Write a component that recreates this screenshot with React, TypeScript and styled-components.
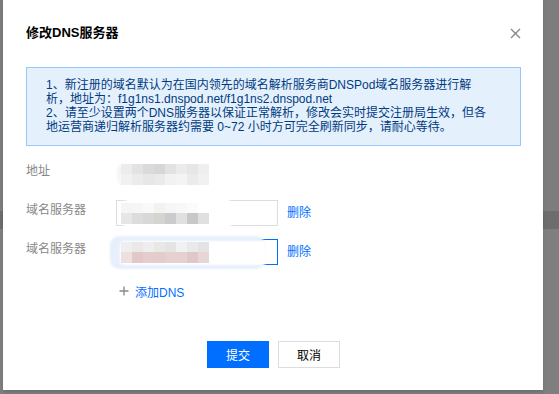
import React from "react";
import styled, { createGlobalStyle } from "styled-components";

const GlobalStyle = createGlobalStyle`
    html, body {
        margin: 0;
        padding: 0;
    }
    body {
        font-family: "Liberation Sans", "Noto Sans CJK SC", sans-serif;
        font-size: 12px;
        background: linear-gradient(to bottom, #7d7d7d 0 211px, #6d6d6d 211px 229px, #7f7f7f 229px);
    }
`;

const Page = styled.div`
    width: 559px;
    height: 394px;
    overflow: hidden;
    display: flex;
    align-items: flex-start;
    padding-left: 3px;
    box-sizing: border-box;
`;

const Dialog = styled.div`
    width: 540px;
    height: 390px;
    background: #fff;
    box-sizing: border-box;
    padding: 0 22px 0 23px;
    box-shadow: 0 2px 3px rgba(0, 0, 0, 0.15);
    display: flex;
    flex-direction: column;
`;

const Header = styled.div`
    display: flex;
    align-items: center;
    justify-content: space-between;
    padding-top: 24px;
    height: 18px;
    margin-bottom: 25px;
`;

const Title = styled.h3`
    margin: 0;
    font-size: 13px;
    font-weight: bold;
    color: #000;
    line-height: 18px;
`;

const CloseButton = styled.button`
    border: 0;
    background: none;
    padding: 0;
    width: 12px;
    height: 12px;
    display: flex;
    align-items: center;
    justify-content: center;
    cursor: pointer;
`;

const Notice = styled.div`
    border: 1px solid #97c7ff;
    background: #e5f0fd;
    color: #003b80;
    padding: 10px 18px 11px 19px;
    line-height: 14px;
    font-size: 12px;
`;

const NoticeLine = styled.div`
    white-space: nowrap;
`;

const Form = styled.div`
    margin-top: 15px;
    display: flex;
    flex-direction: column;
    gap: 13px;
`;

const Row = styled.div`
    display: flex;
    align-items: flex-start;
    min-height: 26px;
`;

const Label = styled.div`
    width: 90px;
    flex-shrink: 0;
    color: #888;
    line-height: 20px;
`;

const Value = styled.div`
    height: 26px;
    display: flex;
    align-items: center;
    padding-left: 5px;
    position: relative;
`;

const InputBox = styled.div<{ $focused?: boolean }>`
    position: relative;
    width: 162px;
    height: 26px;
    box-sizing: border-box;
    border: 1px solid ${(p) => (p.$focused ? "#006eff" : "#dddddd")};
    background: #fff;
    display: flex;
    align-items: center;
    padding-left: 4px;
`;

const Smudge = styled.div<{ $tone: string; $radius: number }>`
    position: absolute;
    border-radius: ${(p) => p.$radius}px;
    background: ${(p) => p.$tone};
    filter: blur(1px);
    z-index: 1;
`;

const MosaicGrid = styled.div`
    position: relative;
    z-index: 2;
    display: grid;
    grid-template-columns: repeat(8, 11px);
    grid-auto-rows: 10.5px;
    filter: blur(0.6px);
`;

const Cell = styled.span<{ $c: string }>`
    background: ${(p) => p.$c};
`;

const LinkButton = styled.a`
    color: #006eff;
    margin-left: 9px;
    line-height: 26px;
    cursor: pointer;
    text-decoration: none;
`;

const AddRow = styled.div`
    display: flex;
    align-items: center;
    height: 26px;
    padding-left: 93px;
    gap: 6px;
    color: #006eff;
    cursor: pointer;
`;

const Footer = styled.div`
    margin-top: 37px;
    display: flex;
    justify-content: center;
    gap: 9px;
`;

const Button = styled.button<{ $primary?: boolean }>`
    width: 62px;
    height: 27px;
    box-sizing: border-box;
    font-family: inherit;
    font-size: 12px;
    border: 1px solid ${(p) => (p.$primary ? "#006eff" : "#dddddd")};
    background: ${(p) => (p.$primary ? "#006eff" : "#fff")};
    color: ${(p) => (p.$primary ? "#fff" : "#000")};
    cursor: pointer;
    padding: 0;
`;

const Mosaic = ({ rows }: { rows: string[][] }) => (
    <MosaicGrid>
        {rows.flat().map((c, i) => (
            <Cell key={i} $c={c} />
        ))}
    </MosaicGrid>
);

const addressCells = [
    ["#ececec", "#e3e3e3", "#dadada", "#d7d7d7", "#e2e2e2", "#ebebeb", "#e6e6e6", "#efefef"],
    ["#f1f1f1", "#ebebeb", "#e7e7e7", "#eaeaea", "#f2f2f2", "#f4f4f4", "#ebebeb", "#f1f1f1"],
];

const firstCells = [
    ["#f5f5f5", "#f6f6f6", "#f9f9f9", "#f2f2f0", "#f6f6f6", "#f8f8f8", "#fbfbfb", "#ffffff"],
    ["#e6e6e6", "#dcdcdc", "#d8d8d8", "#d4d4d0", "#cccacd", "#e0e0e0", "#c8c8c8", "#e0e0e0"],
];

const secondCells = [
    ["#efefef", "#ebe9e7", "#eeeeee", "#e9e8e4", "#e4e4e4", "#f1f1f1", "#e9e9e9", "#e3e3e3"],
    ["#eee0e0", "#e2c8c8", "#e6cdcd", "#e4cccc", "#e6d1d1", "#e6d0d0", "#e0c8ca", "#e6d6d6"],
];

const CloseIcon = () => (
    <svg width="11" height="11" viewBox="0 0 11 11">
        <path d="M1 1 L10 10 M10 1 L1 10" stroke="#888" strokeWidth="1.4" fill="none" />
    </svg>
);

const PlusIcon = () => (
    <svg width="10" height="10" viewBox="0 0 10 10">
        <path d="M5 0.5 V9.5 M0.5 5 H9.5" stroke="#888" strokeWidth="1.3" fill="none" />
    </svg>
);

const App = () => {
    return (
        <>
            <GlobalStyle />
            <Page>
                <Dialog>
                    <Header>
                        <Title>修改DNS服务器</Title>
                        <CloseButton aria-label="关闭">
                            <CloseIcon />
                        </CloseButton>
                    </Header>
                    <Notice>
                        <NoticeLine>1、新注册的域名默认为在国内领先的域名解析服务商DNSPod域名服务器进行解</NoticeLine>
                        <NoticeLine>析，地址为：f1g1ns1.dnspod.net/f1g1ns2.dnspod.net</NoticeLine>
                        <NoticeLine>2、请至少设置两个DNS服务器以保证正常解析，修改会实时提交注册局生效，但各</NoticeLine>
                        <NoticeLine>地运营商递归解析服务器约需要 0~72 小时方可完全刷新同步，请耐心等待。</NoticeLine>
                    </Notice>
                    <Form>
                        <Row>
                            <Label>地址</Label>
                            <Value>
                                <Smudge $tone="#f6f6f6" $radius={10} style={{ left: 1, top: 3, width: 12, height: 20 }} />
                                <Mosaic rows={addressCells} />
                            </Value>
                        </Row>
                        <Row>
                            <Label>域名服务器</Label>
                            <InputBox>
                                <Smudge $tone="#ffffff" $radius={17} style={{ left: 3, top: -5, width: 115, height: 36 }} />
                                <Mosaic rows={firstCells} />
                            </InputBox>
                            <LinkButton>删除</LinkButton>
                        </Row>
                        <Row>
                            <Label>域名服务器</Label>
                            <InputBox $focused>
                                <Smudge $tone="#e6effb" $radius={9} style={{ left: -7, top: -4, width: 155, height: 33 }} />
                                <Smudge $tone="#ffffff" $radius={4} style={{ left: 3, top: 1, width: 146, height: 24 }} />
                                <Mosaic rows={secondCells} />
                            </InputBox>
                            <LinkButton>删除</LinkButton>
                        </Row>
                        <AddRow>
                            <PlusIcon />
                            <span>添加DNS</span>
                        </AddRow>
                    </Form>
                    <Footer>
                        <Button $primary>提交</Button>
                        <Button>取消</Button>
                    </Footer>
                </Dialog>
            </Page>
        </>
    );
};

export default App;
